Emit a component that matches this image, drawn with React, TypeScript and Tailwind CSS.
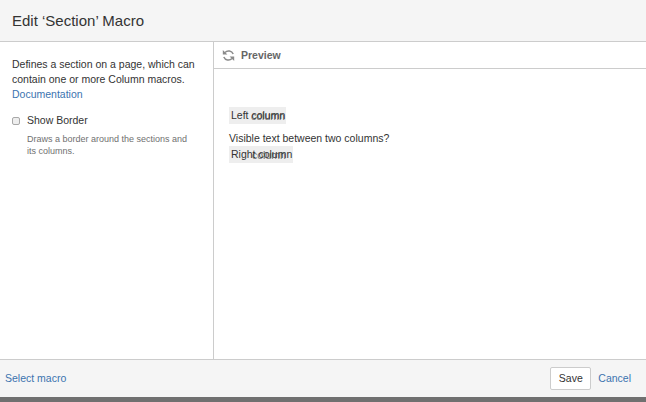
export default function App() {
  return (
    <div className="flex h-[402px] w-[646px] flex-col overflow-hidden bg-white font-['Liberation_Sans',Arial,sans-serif] text-[10.5px] text-[#333333]">
      <header className="flex h-[42px] shrink-0 items-center border-b border-[#cccccc] bg-[#f5f5f5] px-3 pt-[1px]">
        <h2 className="text-[15px] font-normal leading-5">Edit ‘Section’ Macro</h2>
      </header>

      <div className="flex min-h-0 flex-1">
        {/* Macro options */}
        <aside className="w-[214px] shrink-0 border-r border-[#cccccc] px-3 pt-[15px]">
          <p className="leading-[15px]">
            Defines a section on a page, which can contain one or more Column macros.{' '}
            <a className="block text-[#3b73af]">Documentation</a>
          </p>
          <div className="mt-[11px] flex items-center gap-[7px]">
            <span className="h-[8px] w-[8px] rounded-[2px] border border-[#a8a8a8] bg-[#eeeeee]" />
            <label className="leading-[15px]">Show Border</label>
          </div>
          <p className="mt-[5px] pl-[15px] pr-[10px] text-[9px] leading-3 text-[#707070]">
            Draws a border around the sections and its columns.
          </p>
        </aside>

        {/* Preview */}
        <main className="min-w-0 flex-1">
          <div className="flex h-[27px] items-center gap-[6px] border-b border-[#cccccc] pl-[8px] pt-[1px] text-[#666666]">
            <svg width="13" height="13" viewBox="0 0 13 13" fill="none" stroke="#8a8a8a" strokeWidth="1.5">
              <path d="M3 3.5 A5 5 0 0 1 11.2 5" />
              <path d="M0.8 1 L0.8 5.6 L5.4 5.6 Z" fill="#8a8a8a" stroke="none" />
              <path d="M10 9.5 A5 5 0 0 1 1.8 8" />
              <path d="M12.2 12 L12.2 7.4 L7.6 7.4 Z" fill="#8a8a8a" stroke="none" />
            </svg>
            <span className="font-bold">Preview</span>
          </div>
          <div className="pl-[15px] pt-[38px]">
            <div className="relative h-[17px] w-[57px] whitespace-nowrap bg-[#eeeeee] pl-[2px] leading-[16px]">
              <span>Left column</span>
              <span className="absolute left-[22px] top-[1px] opacity-70">column</span>
            </div>
            <p className="mt-[7px] leading-[14px]">Visible text between two columns?</p>
            <div className="relative mt-[1px] h-[17px] w-[64px] whitespace-nowrap bg-[#eeeeee] pl-[2px] leading-[16px]">
              <span>Right column</span>
              <span className="absolute left-[23px] top-[1px] opacity-70">column</span>
            </div>
          </div>
        </main>
      </div>

      <footer className="flex h-[38px] shrink-0 items-center justify-between border-t border-[#cccccc] bg-[#f5f5f5] pl-[5px] pr-[15px]">
        <a className="text-[#3b73af]">Select macro</a>
        <div className="flex items-center gap-[7px]">
          <button className="h-[23px] w-[41px] rounded-[2px] border border-[#cccccc] bg-white text-[#333333]">Save</button>
          <a className="text-[#3b73af]">Cancel</a>
        </div>
      </footer>
      <div className="h-[5px] shrink-0 bg-[#707070]" />
    </div>
  )
}
